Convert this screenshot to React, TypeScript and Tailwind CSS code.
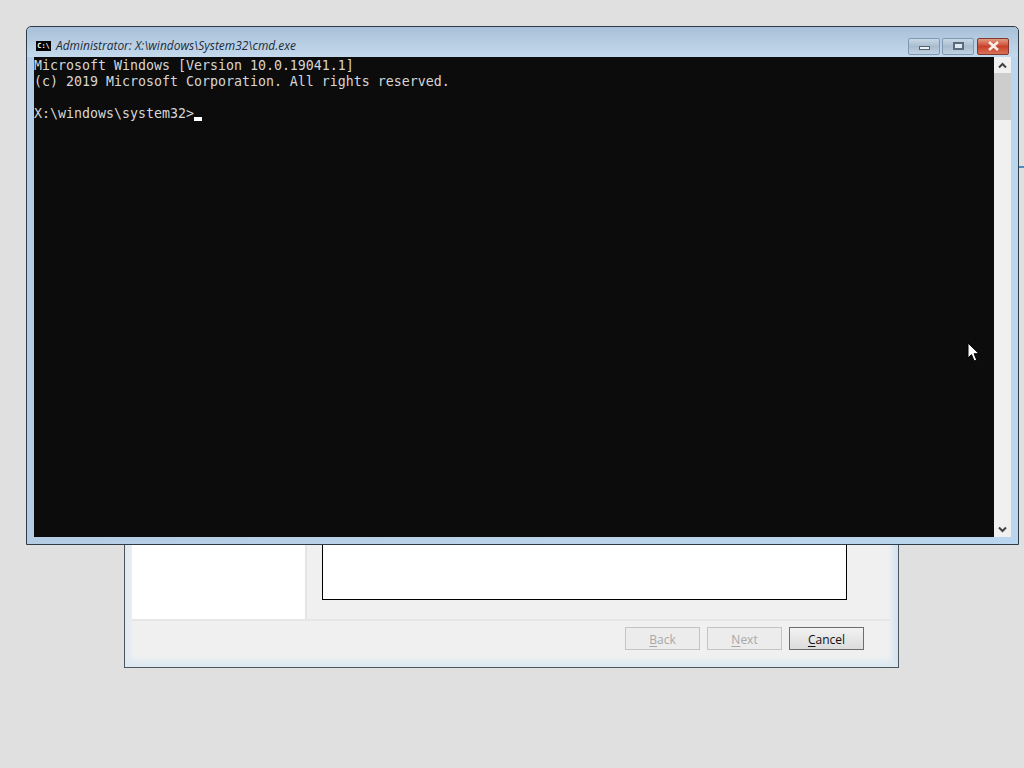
const consoleFont = { fontFamily: '"DejaVu Sans Mono", monospace' };

function WizardButton({ label, hot, disabled }: { label: string; hot: string; disabled?: boolean }) {
  const rest = label.slice(1);
  return (
    <div
      className={
        disabled
          ? "w-[75px] h-[23px] flex items-center justify-center pt-[2px] border border-[#c4c4c4] bg-[#ececec] text-[#a8a8a8]"
          : "w-[75px] h-[23px] flex items-center justify-center pt-[2px] border border-[#6d6d6d] bg-gradient-to-b from-[#f2f2f2] to-[#dcdcdc] text-[#111]"
      }
    >
      <span className="underline underline-offset-2">{hot}</span>
      {rest}
    </div>
  );
}

function CaptionButton({ children, className }: { children: React.ReactNode; className: string }) {
  return (
    <div className={`h-[17px] flex items-center justify-center border rounded-[2px] ${className}`}>
      {children}
    </div>
  );
}

function ScrollArrow({ d }: { d: string }) {
  return (
    <div className="h-[16px] bg-[#f0f0f0] flex items-center justify-center">
      <svg width="9" height="7" viewBox="0 0 9 7" fill="none">
        <path d={d} stroke="#404040" strokeWidth="2" />
      </svg>
    </div>
  );
}

export default function App() {
  return (
    <div className="relative w-[1024px] h-[768px] overflow-hidden bg-[#e0e0e0]">
      <div className="absolute left-[1019px] top-[166px] w-[5px] h-[2px] bg-[#4a8cc8]" />

      {/* setup wizard behind the console */}
      <div
        className="absolute left-[124px] top-[120px] w-[775px] h-[548px] flex flex-col border border-[#4e555a] bg-[#f0f0f0] border-t-0 pl-[7px] pr-[8px] pb-[7px] shadow-[inset_0_-8px_6px_-2px_#dbe8f2,inset_8px_0_6px_-3px_#dfe9f3,inset_-8px_0_6px_-3px_#cfe2f1]"
        style={{ fontFamily: '"Open Sans", "Liberation Sans", sans-serif' }}
      >
        <div className="flex-1 flex">
          <div className="w-[175px] bg-white border-r-2 border-[#e4e4e4]" />
          <div className="flex-1 flex flex-col pl-[15px] pr-[43px] pb-[19px] justify-end">
            <div className="h-[100px] bg-white border border-black" />
          </div>
        </div>
        <div className="h-[41px] border-t-2 border-[#e6e6e6] flex justify-end gap-[7px] pt-[6px] pr-[26px] text-[12px] leading-none">
          <WizardButton label="Back" hot="B" disabled />
          <WizardButton label="Next" hot="N" disabled />
          <WizardButton label="Cancel" hot="C" />
        </div>
      </div>

      {/* console window */}
      <div className="absolute left-[26px] top-[26px] w-[993px] h-[519px] flex flex-col border border-[#2f3c48] rounded-t-[5px] bg-gradient-to-r from-[#b4cde4] via-[#bcd4ea] to-[#b9d6ee]">
        <div className="h-[30px] flex items-center pl-[9px] pr-[9px] pt-[1px] bg-gradient-to-b from-[#a8c0d8] to-[#c4d9ec] rounded-t-[5px]">
          <div className="w-[15px] h-[10px] mt-[6px] bg-black text-white text-[7px] font-bold leading-[10px] text-center overflow-hidden" style={consoleFont}>
            C:\
          </div>
          <span
            className="ml-[5px] mt-[7px] text-[11.95px] italic leading-none text-[#1c2a3a]"
            style={{ fontFamily: '"Open Sans", sans-serif' }}
          >
            Administrator: X:\windows\System32\cmd.exe
          </span>
          <div className="ml-auto flex items-center gap-[2px] mt-[7px]">
            <CaptionButton className="w-[32px] border-[#7f99b2] bg-gradient-to-b from-[#c8d9e8] via-[#a9bccd] to-[#c0d2e2]">
              <div className="w-[11px] h-[4px] mt-[3px] bg-[#eef3f8] border border-[#50616f]" />
            </CaptionButton>
            <CaptionButton className="w-[32px] border-[#7f99b2] bg-gradient-to-b from-[#c8d9e8] via-[#a9bccd] to-[#c0d2e2]">
              <div className="w-[11px] h-[8px] bg-[#dfe9f1] border-2 border-[#5a6b79]" />
            </CaptionButton>
            <CaptionButton className="ml-[1px] w-[32px] border-[#7e3a2e] bg-gradient-to-b from-[#e09a84] via-[#c9412a] to-[#d87055]">
              <svg width="13" height="10" viewBox="0 0 13 10">
                <path d="M2 1l9 8M11 1l-9 8" stroke="#f7efe9" strokeWidth="2.6" />
              </svg>
            </CaptionButton>
          </div>
        </div>

        <div className="flex-1 flex pl-[7px] pr-[7px] pb-[7px]">
          <div
            className="relative flex-1 pt-[1px] bg-[#0c0c0c] text-[#d6d6d6] text-[13.29px] leading-[16px] whitespace-pre"
            style={consoleFont}
          >
            <div>Microsoft Windows [Version 10.0.19041.1]</div>
            <div>(c) 2019 Microsoft Corporation. All rights reserved.</div>
            <div>&nbsp;</div>
            <div className="flex">
              X:\windows\system32&gt;
              <span className="self-end w-[8px] h-[4px] mb-[1px] bg-white" />
            </div>
            <svg className="absolute left-[933px] top-[285px]" width="13" height="21" viewBox="0 0 13 21">
              <path d="M1 1v15l3.5-3.4 2.6 6.4 2.6-1.1-2.6-6.2H12z" fill="#fff" stroke="#000" strokeWidth="1" />
            </svg>
          </div>
          <div className="w-[17px] flex flex-col bg-[#f0f0f0]">
            <ScrollArrow d="M1 5.5l3.5-3.5 3.5 3.5" />
            <div className="h-[47px] bg-[#cdcdcd]" />
            <div className="flex-1" />
            <ScrollArrow d="M1 1.5l3.5 3.5 3.5-3.5" />
          </div>
        </div>
      </div>
    </div>
  );
}
